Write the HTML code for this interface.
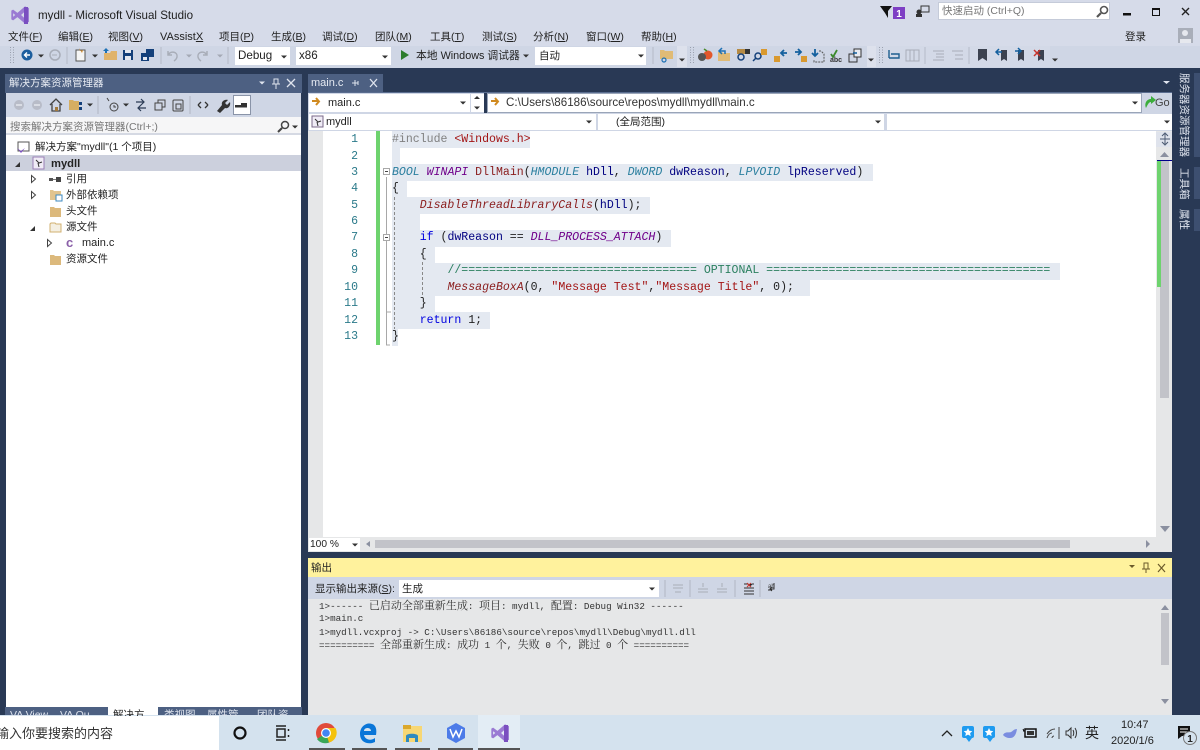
<!DOCTYPE html>
<html><head><meta charset="utf-8"><title>mydll - Microsoft Visual Studio</title>
<style>
html,body{margin:0;padding:0;width:1200px;height:750px;overflow:hidden;background:#cfd6e5}
body{position:relative;font-family:"Liberation Sans","Noto Sans CJK SC",sans-serif;font-size:10.5px;color:#222}
div{position:absolute;box-sizing:border-box}
.t{white-space:pre;line-height:14px;height:14px;margin-top:1px}
.b{background:#e4e9f1;height:16.5px}
.c{font-family:"Liberation Mono",monospace;font-size:11.55px;line-height:16px;height:16px;white-space:pre;left:392px;color:#222;margin-top:1px}
.n{font-family:"Liberation Mono",monospace;font-size:11.55px;line-height:16px;height:16px;left:330px;width:28px;text-align:right;color:#2b7a8a;margin-top:1px}
.ty{color:#2b7f9f;font-style:italic}.mc{color:#6f008a;font-style:italic}.fn{color:#8a1c1c}.fi{color:#8a1c1c;font-style:italic}
.pr{color:#000080}.kw{color:#0000e0}.st{color:#a31515}.cm{color:#2c8060}
.o{font-family:"Liberation Mono",monospace;font-size:9.24px;line-height:13px;height:13px;left:319px;white-space:pre;color:#333}
.o span{font-family:"Noto Serif CJK SC",serif;font-size:11px}
.v{left:1178px;width:12px;font-size:10.5px;line-height:12px;color:#dfe4ee;writing-mode:vertical-rl;text-orientation:sideways;white-space:nowrap}
svg{position:absolute;left:0;top:0}
</style></head><body>
<!-- backgrounds -->
<div style="left:0;top:0;width:1200px;height:46px;background:#d6dbe9"></div>
<div style="left:0;top:68px;width:1200px;height:648px;background:#293955"></div>
<!-- toolbar lighter zones -->
<div style="left:677px;top:46px;width:10px;height:21px;background:#dde1ec"></div>
<div style="left:867px;top:46px;width:9px;height:21px;background:#dde1ec"></div>
<div style="left:876px;top:46px;width:174px;height:21px;background:#d3d9e7"></div>
<!-- combos -->
<div style="left:235px;top:47px;width:55px;height:18px;background:#fff"></div>
<div style="left:296px;top:47px;width:95px;height:18px;background:#fff"></div>
<div style="left:535px;top:47px;width:111px;height:18px;background:#fff"></div>
<div style="left:938px;top:2px;width:172px;height:18px;background:#fff;border:1px solid #c5cbd9"></div>
<!-- solution explorer -->
<div style="left:5px;top:74px;width:297px;height:19px;background:#4d6082"></div>
<div style="left:6px;top:93px;width:295px;height:24px;background:#cfd6e5"></div>
<div style="left:6px;top:117px;width:295px;height:18px;background:#f6f6f7;border-bottom:2px solid #d5d9e3"></div>
<div style="left:6px;top:135px;width:295px;height:572px;background:#fff"></div>
<div style="left:6px;top:155px;width:295px;height:16px;background:#ccd0dd"></div>
<div style="left:233px;top:95px;width:18px;height:20px;background:#fff;border:1px solid #8a94a8"></div>
<div style="left:5px;top:707px;width:103px;height:9px;background:#4d6082"></div>
<div style="left:108px;top:707px;width:50px;height:9px;background:#fff"></div>
<div style="left:158px;top:707px;width:144px;height:9px;background:#4d6082"></div>
<!-- editor -->
<div style="left:308px;top:74px;width:75px;height:19px;background:#4d6082"></div>
<div style="left:308px;top:92px;width:864px;height:2px;background:#5a6d8f"></div>
<div style="left:308px;top:93px;width:864px;height:38px;background:#cfd6e5"></div>
<div style="left:309px;top:94px;width:161px;height:18px;background:#fff"></div>
<div style="left:471px;top:94px;width:13px;height:18px;background:#fff"></div>
<div style="left:484px;top:93px;width:3px;height:20px;background:#293955"></div>
<div style="left:487px;top:93px;width:655px;height:20px;background:#fff;border:1px solid #9aa5b8"></div>
<div style="left:309px;top:114px;width:287px;height:16px;background:#fff"></div>
<div style="left:598px;top:114px;width:286px;height:16px;background:#fff"></div>
<div style="left:887px;top:114px;width:285px;height:16px;background:#fff"></div>
<div style="left:308px;top:131px;width:848px;height:406px;background:#fff"></div>
<div style="left:308px;top:131px;width:15px;height:406px;background:#e6e7e8"></div>
<div style="left:1156px;top:131px;width:16px;height:420px;background:#e6e7e8"></div>
<div style="left:308px;top:537px;width:864px;height:15px;background:#e6e7e8"></div>
<div style="left:309px;top:538px;width:51px;height:13px;background:#fff"></div>
<div style="left:375px;top:540px;width:695px;height:8px;background:#c2c3c9"></div>
<div style="left:1156px;top:132px;width:16px;height:15px;background:#dfe3ec"></div>
<div style="left:1157px;top:160px;width:15px;height:1px;background:#00008b"></div>
<div style="left:1160px;top:161px;width:9px;height:237px;background:#c2c3c9"></div>
<div style="left:1157px;top:161px;width:4px;height:126px;background:#6ed36e"></div>
<!-- code bands -->
<div class="b" style="left:392px;top:131px;width:138px"></div>
<div class="b" style="left:392px;top:148px;width:8px"></div>
<div class="b" style="left:392px;top:164px;width:481px"></div>
<div class="b" style="left:392px;top:181px;width:15px"></div>
<div class="b" style="left:392px;top:197px;width:258px"></div>
<div class="b" style="left:392px;top:213px;width:28px"></div>
<div class="b" style="left:392px;top:230px;width:279px"></div>
<div class="b" style="left:392px;top:246px;width:43px"></div>
<div class="b" style="left:392px;top:263px;width:668px"></div>
<div class="b" style="left:392px;top:279px;width:418px"></div>
<div class="b" style="left:392px;top:296px;width:43px"></div>
<div class="b" style="left:392px;top:312px;width:98px"></div>
<div class="b" style="left:392px;top:329px;width:6px"></div>
<div style="left:376px;top:131px;width:4px;height:214px;background:#6ed36e"></div>
<!-- line numbers -->
<div class="n" style="top:131px">1</div><div class="n" style="top:148px">2</div><div class="n" style="top:164px">3</div>
<div class="n" style="top:180px">4</div><div class="n" style="top:197px">5</div><div class="n" style="top:213px">6</div>
<div class="n" style="top:229px">7</div><div class="n" style="top:246px">8</div><div class="n" style="top:262px">9</div>
<div class="n" style="top:279px">10</div><div class="n" style="top:295px">11</div><div class="n" style="top:312px">12</div>
<div class="n" style="top:328px">13</div>
<!-- code -->
<div class="c" style="top:131px"><span style="color:#808080">#include </span><span class="st">&lt;Windows.h&gt;</span></div>
<div class="c" style="top:164px"><span class="ty">BOOL</span> <span class="mc">WINAPI</span> <span class="fn">DllMain</span>(<span class="ty">HMODULE</span> <span class="pr">hDll</span>, <span class="ty">DWORD</span> <span class="pr">dwReason</span>, <span class="ty">LPVOID</span> <span class="pr">lpReserved</span>)</div>
<div class="c" style="top:180px">{</div>
<div class="c" style="top:197px">    <span class="fi">DisableThreadLibraryCalls</span>(<span class="pr">hDll</span>);</div>
<div class="c" style="top:229px">    <span class="kw">if</span> (<span class="pr">dwReason</span> == <span class="mc">DLL_PROCESS_ATTACH</span>)</div>
<div class="c" style="top:246px">    {</div>
<div class="c" style="top:262px">        <span class="cm">//================================== OPTIONAL =========================================</span></div>
<div class="c" style="top:279px">        <span class="fi">MessageBoxA</span>(0, <span class="st">"Message Test"</span>,<span class="st">"Message Title"</span>, 0);</div>
<div class="c" style="top:295px">    }</div>
<div class="c" style="top:312px">    <span class="kw">return</span> 1;</div>
<div class="c" style="top:328px">}</div>
<!-- output -->
<div style="left:308px;top:558px;width:864px;height:19px;background:#fff29d"></div>
<div style="left:308px;top:577px;width:864px;height:22px;background:#cfd6e5"></div>
<div style="left:308px;top:599px;width:864px;height:117px;background:#e6e7e8"></div>
<div style="left:399px;top:580px;width:260px;height:17px;background:#fff"></div>
<div style="left:1161px;top:613px;width:8px;height:52px;background:#c2c3c9"></div>
<div class="o" style="top:598.5px">1&gt;------ <span>已启动全部重新生成</span>: <span>项目</span>: mydll, <span>配置</span>: Debug Win32 ------</div>
<div class="o" style="top:612px">1&gt;main.c</div>
<div class="o" style="top:625.5px">1&gt;mydll.vcxproj -&gt; C:\Users\86186\source\repos\mydll\Debug\mydll.dll</div>
<div class="o" style="top:637.5px">========== <span>全部重新生成</span>: <span>成功</span> 1 <span>个</span>, <span>失败</span> 0 <span>个</span>, <span>跳过</span> 0 <span>个</span> ==========</div>
<!-- side tabs -->
<div style="left:1194px;top:73px;width:6px;height:84px;background:#3d4f70"></div>
<div style="left:1194px;top:167px;width:6px;height:32px;background:#3d4f70"></div>
<div style="left:1194px;top:209px;width:6px;height:22px;background:#3d4f70"></div>
<div class="v" style="top:73px">服务器资源管理器</div>
<div class="v" style="top:168px">工具箱</div>
<div class="v" style="top:209px">属性</div>
<!-- taskbar -->
<div style="left:0;top:715px;width:1200px;height:35px;background:#d4e2ee"></div>
<div style="left:0;top:716px;width:219px;height:34px;background:#fff"></div>
<div style="left:478px;top:715px;width:42px;height:35px;background:#e3edf5"></div>
<div style="left:309px;top:748px;width:36px;height:2px;background:#555"></div>
<div style="left:352px;top:748px;width:35px;height:2px;background:#555"></div>
<div style="left:395px;top:748px;width:35px;height:2px;background:#555"></div>
<div style="left:438px;top:748px;width:35px;height:2px;background:#555"></div>
<div style="left:478px;top:748px;width:42px;height:2px;background:#555"></div>
<!-- text -->
<div class="t" style="left:38px;top:8px;font-size:11.6px;color:#1e1e1e">mydll - Microsoft Visual Studio</div>
<div class="t" style="left:8px;top:29px">文件(<u>F</u>)</div><div class="t" style="left:58px;top:29px">编辑(<u>E</u>)</div>
<div class="t" style="left:108px;top:29px">视图(<u>V</u>)</div><div class="t" style="left:160px;top:29px;font-size:11px">VAssist<u>X</u></div>
<div class="t" style="left:219px;top:29px">项目(<u>P</u>)</div><div class="t" style="left:271px;top:29px">生成(<u>B</u>)</div>
<div class="t" style="left:322px;top:29px">调试(<u>D</u>)</div><div class="t" style="left:375px;top:29px">团队(<u>M</u>)</div>
<div class="t" style="left:430px;top:29px">工具(<u>T</u>)</div><div class="t" style="left:482px;top:29px">测试(<u>S</u>)</div>
<div class="t" style="left:533px;top:29px">分析(<u>N</u>)</div><div class="t" style="left:586px;top:29px">窗口(<u>W</u>)</div>
<div class="t" style="left:641px;top:29px">帮助(<u>H</u>)</div>
<div class="t" style="left:238px;top:48px;font-size:11.6px">Debug</div>
<div class="t" style="left:299px;top:48px;font-size:11.6px">x86</div>
<div class="t" style="left:416px;top:48px;font-size:10.8px">本地 Windows 调试器</div>
<div class="t" style="left:539px;top:48px">自动</div>
<div class="t" style="left:942px;top:3px;color:#777">快速启动 (Ctrl+Q)</div>
<div class="t" style="left:1125px;top:29px">登录</div>
<div class="t" style="left:9px;top:75px;color:#e6eaf2">解决方案资源管理器</div>
<div class="t" style="left:10px;top:119px;color:#777">搜索解决方案资源管理器(Ctrl+;)</div>
<div class="t" style="left:35px;top:139px">解决方案"mydll"(1 个项目)</div>
<div class="t" style="left:51px;top:156px;font-weight:bold;font-size:11.2px">mydll</div>
<div class="t" style="left:66px;top:171px">引用</div>
<div class="t" style="left:66px;top:187px">外部依赖项</div>
<div class="t" style="left:66px;top:203px">头文件</div>
<div class="t" style="left:66px;top:219px">源文件</div>
<div class="t" style="left:82px;top:235px;font-size:11px">main.c</div>
<div class="t" style="left:66px;top:251px">资源文件</div>
<div class="t" style="left:311px;top:75px;font-size:11px;color:#e6eaf2">main.c</div>
<div class="t" style="left:328px;top:95px;font-size:11px">main.c</div>
<div class="t" style="left:506px;top:95px;font-size:11.6px;color:#333">C:\Users\86186\source\repos\mydll\mydll\main.c</div>
<div class="t" style="left:1155px;top:95px;font-size:11px;color:#444">Go</div>
<div class="t" style="left:326px;top:114px;font-size:11px">mydll</div>
<div class="t" style="left:616px;top:114px">(全局范围)</div>
<div class="t" style="left:310px;top:537px;font-size:10.2px">100 %</div>
<div class="t" style="left:311px;top:560px">输出</div>
<div class="t" style="left:315px;top:581px">显示输出来源(<u>S</u>):</div>
<div class="t" style="left:402px;top:581px">生成</div>
<div class="t" style="left:10px;top:707px;color:#dfe4ee;height:8px;overflow:hidden">VA View</div>
<div class="t" style="left:60px;top:707px;color:#dfe4ee;height:8px;overflow:hidden">VA Ou</div>
<div class="t" style="left:113px;top:707px;height:8px;overflow:hidden">解决方</div>
<div class="t" style="left:164px;top:707px;color:#dfe4ee;height:8px;overflow:hidden">类视图</div>
<div class="t" style="left:207px;top:707px;color:#dfe4ee;height:8px;overflow:hidden">属性管</div>
<div class="t" style="left:257px;top:707px;color:#dfe4ee;height:8px;overflow:hidden">团队资</div>
<div class="t" style="left:-4px;top:724px;font-size:13px;height:18px;line-height:18px;color:#333">输入你要搜索的内容</div>
<div class="t" style="left:1085px;top:723px;font-size:14px;height:18px;line-height:18px">英</div>
<div class="t" style="left:1121px;top:717px;font-size:11px">10:47</div>
<div class="t" style="left:1111px;top:733px;font-size:11px">2020/1/6</div>
<!-- icons -->
<svg width="1200" height="750" viewBox="0 0 1200 750">
<defs>
<g id="dn"><path d="M-3 -1.5H3L0 1.5Z"/></g>
<path id="vs" fill-rule="evenodd" d="M12.5 -12 L18 -9.5 V9.5 L12.5 12 L2 3 L-4 7.5 L-6.5 6 V-6 L-4 -7.5 L2 -3 Z M12.5 -5 L7 0 L12.5 5 Z M-4 -2.5 V2.5 L-1 0 Z"/>
</defs>
<!-- title logo -->
<use href="#vs" transform="translate(16,15) scale(.72)" fill="#9a7ad3"/>
<rect x="24" y="7" width="4" height="17" fill="#7a4fc0"/>
<!-- top right -->
<path d="M880 6H892L888 11V18L885 13Z" fill="#111"/>
<rect x="893" y="7" width="12" height="12" fill="#7e3fc4"/>
<text x="899" y="17" font-family="Liberation Sans" font-size="10" font-weight="bold" fill="#fff" text-anchor="middle">1</text>
<rect x="921" y="6" width="8" height="6" fill="none" stroke="#333"/><circle cx="919" cy="12" r="2.5" fill="#333"/><rect x="916" y="14" width="6" height="3" fill="#333"/>
<g fill="none" stroke="#555" stroke-width="1.6"><circle cx="1104" cy="10" r="3.5"/><path d="M1101 13L1097 17" stroke-width="2.2"/></g>
<rect x="1123" y="13" width="8" height="2.5" fill="#111"/>
<rect x="1152.500" y="8.500" width="7" height="7" fill="none" stroke="#111"/><rect x="1152" y="8" width="8" height="2" fill="#111"/>
<path d="M1182 8L1189 15M1189 8L1182 15" stroke="#222" stroke-width="1.4"/>
<rect x="1178" y="28" width="15" height="15" fill="#a9aeb9"/><circle cx="1185" cy="33" r="3" fill="#e6e8ee"/><path d="M1180 43V39H1191V43Z" fill="#e6e8ee"/>
<!-- toolbar grips -->
<g fill="none" stroke="#9aa0ae" stroke-dasharray="1 1.500"><path d="M10.500 47V64M13.500 47V64M690.500 47V64M693.500 47V64M879.500 47V64M882.500 47V64"/></g>
<circle cx="27" cy="55" r="5.500" fill="#1c5e9e"/><path d="M30 55H25M27 52.500L24.500 55L27 57.500" stroke="#fff" stroke-width="1.400" fill="none"/>
<circle cx="55" cy="55" r="5" fill="none" stroke="#a8adb8" stroke-width="1.500"/><path d="M52 55h5" stroke="#a8adb8"/>
<g fill="#333"><use href="#dn" x="41" y="56"/><use href="#dn" x="95" y="56"/><use href="#dn" x="284" y="57"/><use href="#dn" x="385" y="57"/><use href="#dn" x="526" y="56"/><use href="#dn" x="641" y="56"/><use href="#dn" x="682" y="60"/><use href="#dn" x="871" y="60"/><use href="#dn" x="1055" y="60"/></g>
<g fill="#a4a9b5"><use href="#dn" x="189" y="56"/><use href="#dn" x="220" y="56"/></g>
<g stroke="#b4bac8"><path d="M67 47V64M161 47V64M228 47V64M653 47V64M925 47V64M969 47V64"/></g>
<rect x="76" y="50" width="9" height="11" fill="#f5f5f5" stroke="#555"/><path d="M79 48l1 3 3-1-1 3" fill="#d18a2c"/>
<path d="M104 53h6l1-2h6v9h-13Z" fill="#e0b36a"/><path d="M106 48l3 3h-2v2h-2v-2h-2Z" fill="#1e71b5"/>
<path d="M123 50h10v10h-10Z" fill="#14407a"/><rect x="125" y="50" width="6" height="3" fill="#e4e8f0"/><rect x="125" y="56" width="6" height="4" fill="#e4e8f0"/>
<path d="M141 53h8v8h-8Z" fill="#14407a"/><path d="M146 49h8v8h-5v-4h-3Z" fill="#14407a"/><rect x="143" y="57" width="4" height="3" fill="#e4e8f0"/>
<g fill="none" stroke="#a8adb8" stroke-width="1.500"><path d="M168 51v4h4M168 55c3-5 10-3 9 2-.5 2-1.500 3-3 4"/><path d="M207 51v4h-4M207 55c-3-5-10-3-9 2 .5 2 1.500 3 3 4"/></g>
<path d="M401 50l8 5-8 5Z" fill="#2d7d2d"/>
<path d="M660 50h4l1 1h8v8h-13Z" fill="#e0bb76"/><circle cx="664" cy="60" r="2" fill="none" stroke="#1e71b5" stroke-width="1.200"/>
<circle cx="708" cy="55" r="4.500" fill="#e2572b"/><circle cx="702" cy="57" r="4" fill="#555"/><path d="M704 49l3 2" stroke="#4a8a2a" stroke-width="1.500"/>
<path d="M718 52h4l1 1h7v8h-12Z" fill="#e0bb76"/><path d="M722 48l-3 3 3 3M720 51h5v3" fill="none" stroke="#1e71b5" stroke-width="1.500"/>
<rect x="737" y="49" width="8" height="5" fill="#b58a44"/><rect x="745" y="49" width="5" height="5" fill="#333"/><circle cx="741" cy="57" r="3" fill="none" stroke="#14407a" stroke-width="1.500"/>
<circle cx="758" cy="56" r="3" fill="none" stroke="#14407a" stroke-width="1.500"/><path d="M756 58l-3 3" stroke="#14407a" stroke-width="1.500"/><rect x="761" y="49" width="6" height="6" fill="#d9992f"/>
<rect x="774" y="56" width="6" height="6" fill="#d9992f"/><path d="M787 53h-6M784 50l-3 3 3 3" stroke="#14609e" stroke-width="1.800" fill="none"/>
<rect x="801" y="56" width="6" height="6" fill="#d9992f"/><path d="M795 52h6M798 49l3 3-3 3" stroke="#14609e" stroke-width="1.800" fill="none"/>
<path d="M815 49v7M812 53l3 3 3-3" stroke="#14609e" stroke-width="1.800" fill="none"/><path d="M819 51h2l3 3v8h-10v-2" fill="none" stroke="#555" stroke-dasharray="2 1"/>
<path d="M831 54l2 3 4-7" stroke="#3c8a2c" stroke-width="1.800" fill="none"/><text x="830" y="62" font-size="7" font-family="Liberation Sans" font-weight="bold" fill="#333">abc</text>
<rect x="849" y="54" width="8" height="8" fill="none" stroke="#333"/><rect x="854" y="49" width="7" height="8" fill="#e8ebf2" stroke="#333"/><path d="M853 53h4" stroke="#14609e" stroke-width="1.500"/>
<path d="M889 50v8M889 58h10v-4h-8" stroke="#1f5f8f" fill="none" stroke-width="1.400"/>
<g fill="none" stroke="#a8adb8"><rect x="906" y="50" width="13" height="11"/><path d="M910 50v11M914 50v11"/><path d="M933 51h11M936 54h8M936 57h8M933 60h11M952 51h11M955 55h8M955 59h8"/></g>
<path d="M978 49h9v12l-4.500-3-4.500 3Z" fill="#3c4250"/>
<g fill="#3c4250"><path d="M1001 50h6v11l-3-2-3 2Z"/><path d="M1018 50h6v11l-3-2-3 2Z"/><path d="M1038 50h6v11l-3-2-3 2Z"/></g>
<path d="M1002 52h-5M999 49l-3 3 3 3" stroke="#14609e" stroke-width="1.500" fill="none"/>
<path d="M1015 51h5M1018 48l3 3-3 3" stroke="#14609e" stroke-width="1.500" fill="none"/>
<path d="M1034 50l6 6M1040 50l-6 6" stroke="#c8342c" stroke-width="1.500"/>
<!-- SE title icons -->
<g fill="#dfe4ee"><use href="#dn" x="262" y="83"/></g>
<g stroke="#dfe4ee" fill="none"><path d="M274 79h4v5h-4ZM276 84v5M272 84h8"/><path d="M287 79l8 8M295 79l-8 8" stroke-width="1.300"/></g>
<!-- SE toolbar -->
<g fill="#b8bcc8"><circle cx="19" cy="105" r="5"/><circle cx="37" cy="105" r="5"/></g><path d="M22 105h-6M34 105h6" stroke="#e4e7ee" stroke-width="1.500"/>
<path d="M50 105l6-6 6 6M52 104v7h8v-7" stroke="#444" fill="none" stroke-width="1.300"/><rect x="55" y="107" width="3" height="4" fill="#a37a3c"/>
<path d="M69 100h4l1 1h5v9h-10Z" fill="#d5ae62"/><rect x="79" y="102" width="3" height="3" fill="#14407a"/><rect x="79" y="107" width="3" height="3" fill="#14407a"/>
<g fill="#333"><use href="#dn" x="90" y="105"/><use href="#dn" x="126" y="105"/><use href="#dn" x="295" y="127"/><use href="#dn" x="463" y="103"/><use href="#dn" x="477" y="108"/><use href="#dn" x="1135" y="103"/><use href="#dn" x="589" y="122"/><use href="#dn" x="878" y="122"/><use href="#dn" x="1167" y="122"/><use href="#dn" x="355" y="545"/><use href="#dn" x="652" y="589"/></g>
<path d="M474 99l3-3 3 3Z" fill="#333"/>
<g stroke="#b0b6c4"><path d="M98 96V114M190 96V114"/></g>
<circle cx="114" cy="107" r="4" fill="none" stroke="#444"/><path d="M114 105v2h2M107 98l2 3" stroke="#444" fill="none"/>
<path d="M136 102h8M141 99l3 3-3 3M146 108h-8M141 105l-3 3 3 3" stroke="#2b3b55" fill="none" stroke-width="1.200"/>
<g fill="none" stroke="#444"><rect x="155" y="103" width="7" height="7"/><path d="M158 103v-3h7v7h-3"/><rect x="173" y="100" width="10" height="11" rx="1"/><rect x="176" y="104" width="5" height="5"/></g>
<path d="M198 105l3-3M198 105l3 3M208 105l-3-3M208 105l-3 3" stroke="#333" stroke-width="1.300"/>
<path d="M217 111l5-6c-1-3 2-6 6-5l-3 3 2 2 3-3c1 4-2 7-5 6l-5 5Z" fill="#333"/>
<rect x="235" y="105" width="12" height="2.500" fill="#333"/><rect x="241" y="103" width="6" height="2" fill="#333"/>
<g fill="none" stroke="#444" stroke-width="1.500"><circle cx="285" cy="125" r="3.500"/><path d="M282 128l-4 4" stroke-width="2"/></g>
<!-- tree -->
<rect x="18" y="142" width="11" height="9" fill="none" stroke="#555"/><path d="M17 148l4 3 4-3-4 5Z" fill="#7a4fc0"/>
<path d="M15 167l5-5v5Z" fill="#333"/><path d="M30 231l5-5v5Z" fill="#333"/>
<rect x="33" y="157" width="11" height="12" fill="#f0ecf6" stroke="#9a7fb5"/><path d="M36 160l3 3 3-1M38 163l1 4" stroke="#333" fill="none"/>
<g fill="none" stroke="#444"><path d="M31.500 175.500l4 3.500-4 3.500Z"/><path d="M31.500 191.500l4 3.500-4 3.500Z"/><path d="M47.500 239.500l4 3.500-4 3.500Z"/></g>
<rect x="49" y="178" width="4" height="3" fill="#555"/><rect x="56" y="177" width="5" height="5" fill="#444"/><path d="M53 179.500h3" stroke="#777"/>
<path d="M50 190h3l1 1h7v9h-11Z" fill="#e2c48e"/><rect x="56" y="195" width="6" height="6" fill="#fff" stroke="#3c8ac0"/>
<g fill="#dcb97c"><path d="M50 207h4l1 1h6v9h-11Z"/><path d="M50 255h4l1 1h6v9h-11Z"/></g>
<path d="M51 223h4l1 1h5v8h-11v-8Z" fill="#f4efe2" stroke="#d2b070"/>
<text x="66" y="247" font-size="13" font-weight="bold" font-family="Liberation Sans" fill="#8a5fa8">c</text>
<!-- nav -->
<path d="M312 101h7M316 98l3 3.500-3 3.500" stroke="#d08a20" stroke-width="2" fill="none"/>
<path d="M491 101h7M495 98l3 3.500-3 3.500" stroke="#d08a20" stroke-width="2" fill="none"/>
<path d="M1146 108c-2-5 1-9 5-9v-3l5 4-5 4v-2c-2 0-3 2-5 6Z" fill="#3cae3c"/>
<rect x="312" y="116" width="11" height="11" fill="#f0ecf6" stroke="#7a6a8a"/><path d="M315 119l3 3 3-1M317 122l1 4" stroke="#333" fill="none"/>
<!-- outline -->
<g fill="none" stroke="#a8a8a8"><path d="M386.500 177V345H390"/><rect x="383.500" y="168.500" width="6" height="6" fill="#fff"/><rect x="383.500" y="234.500" width="6" height="6" fill="#fff"/><path d="M385 171.500h3M385 237.500h3" stroke="#444"/><path d="M386.500 312H391"/></g>
<g stroke="#888" stroke-dasharray="3 2"><path d="M394.500 197V329M422.500 262V295"/></g>
<!-- scrollbars -->
<path d="M1160 139h10M1165 134v10M1162 136l3-3 3 3M1162 142l3 3 3-3" stroke="#4b5a72" fill="none"/>
<g fill="#8b90a0"><path d="M1160 157l4.500-5 4.500 5Z"/><path d="M1160 526h10l-5 6Z"/><path d="M370 541v6l-4-3Z"/><path d="M1146 540v8l4-4Z"/><path d="M1161 610l4-5 4 5Z"/><path d="M1161 699h8l-4 5Z"/></g>
<path d="M1163 81h7l-3.500 3Z" fill="#dfe4ee"/>
<!-- tab pin/close -->
<g stroke="#dfe4ee" fill="none"><path d="M352 83h6M355 80v6M358 81v4"/><path d="M370 79l7 8M377 79l-7 8" stroke-width="1.300"/></g>
<!-- output header -->
<path d="M1129 565h6l-3 3Z" fill="#6b5a2a"/><path d="M1144 563h4v6h-4ZM1146 569v4M1142 569h8" stroke="#6b5a2a" fill="none"/><path d="M1158 564l7 8M1165 564l-7 8" stroke="#6b5a2a" stroke-width="1.200"/>
<g stroke="#b0b6c4"><path d="M665 580V597M690 580V597M735 580V597M760 580V597"/></g>
<g fill="none" stroke="#a8adb8"><path d="M673 585h10M673 588h10M675 592h6"/><path d="M698 589h10M698 592h10M703 583v4"/><path d="M717 589h10M717 592h10M722 583v4"/></g>
<path d="M744 584h4l2 2 2-2h2M744 588h10M744 591h10M744 594h10" stroke="#333"/><path d="M747 583l4 4M751 583l-4 4" stroke="#c8342c"/>
<text x="768" y="588" font-size="6" font-family="Liberation Sans" fill="#333">ab</text><path d="M774 583v6h-4M772 587l-2 2 2 2M768 590h4" stroke="#333" fill="none"/>
<!-- taskbar icons -->
<circle cx="240" cy="733" r="5.500" fill="none" stroke="#111" stroke-width="2.200"/>
<g fill="none" stroke="#222" stroke-width="1.500"><path d="M276 726h10M276 740h10"/><rect x="277" y="729" width="8" height="8"/><path d="M288.500 729v2M288.500 735v2"/></g>
<circle cx="326" cy="733" r="10" fill="#e04a3a"/><path d="M326 733L317 739A10 10 0 0 0 329 742.500Z" fill="#3aa757"/><path d="M326 733L329 742.500A10 10 0 0 0 335.500 728L326 728Z" fill="#f4c20d"/><circle cx="326" cy="733" r="5" fill="#fff"/><circle cx="326" cy="733" r="3.800" fill="#4285f4"/>
<path d="M376 735h-12c1 5 7 6 11 3v4c-6 3-15 1-15-8 0-8 7-12 12-10 4 1 5 6 4 11Zm-5-4c0-4-7-4-7 0Z" fill="#0a76d8"/>
<rect x="403" y="726" width="19" height="16" fill="#f7d774"/><rect x="403" y="725" width="8" height="4" fill="#dba82c"/><path d="M406 742v-6c0-3 12-3 12 0v6h-3v-4h-6v4Z" fill="#2e8ac0"/>
<path d="M456 723l9 5v10l-9 5-9-5v-10Z" fill="#4c7be8"/><path d="M450 729l3 8 3-6 3 6 3-8" stroke="#fff" stroke-width="1.500" fill="none"/>
<use href="#vs" transform="translate(496,733) scale(.72)" fill="#9a7ad3"/><rect x="504" y="725" width="4" height="17" fill="#7a4fc0"/>
<path d="M942 736l5-5 5 5" stroke="#222" stroke-width="1.300" fill="none"/>
<g fill="#1e9bf0"><rect x="962" y="726" width="12" height="12" rx="2"/><path d="M966 738h6l-3 4Z"/><rect x="983" y="726" width="12" height="12" rx="2"/><path d="M987 738h6l-3 4Z"/></g>
<g fill="#fff"><path d="M968 728l1.300 2.700 3 .4-2.200 2 .6 3-2.700-1.500-2.700 1.500.6-3-2.200-2 3-.4Z"/><path d="M989 728l1.300 2.700 3 .4-2.200 2 .6 3-2.700-1.500-2.700 1.500.6-3-2.200-2 3-.4Z"/></g>
<path d="M1003 735c2-4 6-2 8-3 2-1 3-3 6-3-1 6-3 9-7 9-3 0-5-1-7-3Z" fill="#7a8de0"/>
<rect x="1025" y="729" width="11" height="8" fill="none" stroke="#111" stroke-width="1.500"/><rect x="1027" y="731" width="7" height="4" fill="#333"/><path d="M1024 731l-1-2M1025 731h-2" stroke="#111"/>
<g fill="none" stroke="#444"><path d="M1047 738c1-3 3-5 5-5M1047 734c2-3 5-5 8-5M1052 738c0-1 1-2 2-2"/><path d="M1059 727v12"/></g>
<path d="M1066 731h2l3-3v10l-3-3h-2Z" fill="none" stroke="#333"/><path d="M1073 730c1 2 1 4 0 6M1075 728c2 3 2 7 0 10" fill="none" stroke="#333"/>
<path d="M1178 726h12v10h-8l-4 3Z" fill="#111"/><path d="M1180 729h8M1180 732h8" stroke="#fff"/>
<circle cx="1190" cy="738" r="6.500" fill="#d4e2ee" stroke="#777"/>
<text x="1190" y="742" font-size="10" font-weight="bold" font-family="Liberation Sans" fill="#222" text-anchor="middle">1</text>
</svg>
</body></html>
